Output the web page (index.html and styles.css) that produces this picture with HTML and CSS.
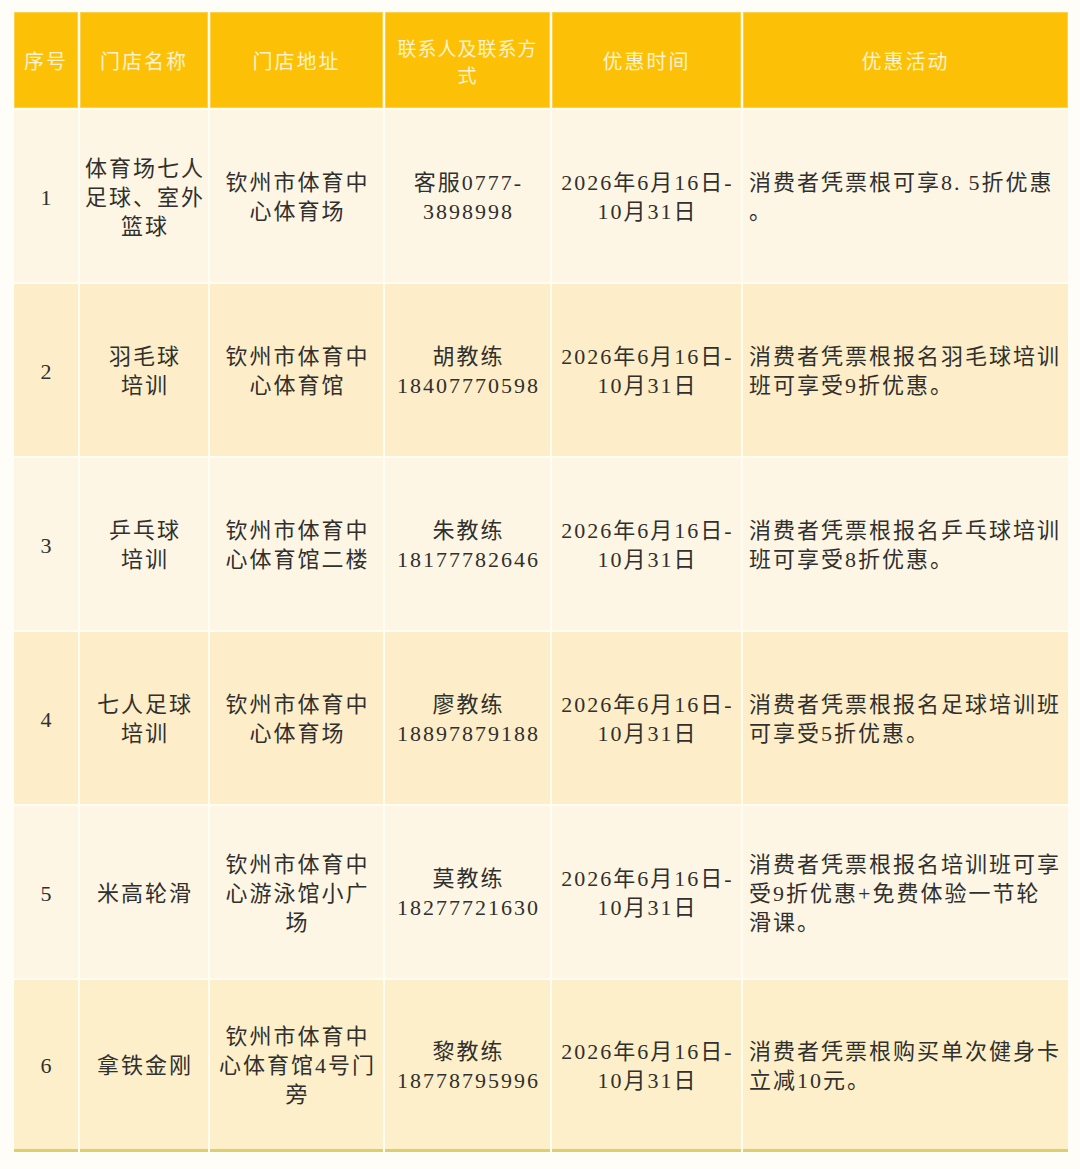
FILE: index.html
```html
<!DOCTYPE html>
<html lang="zh-CN">
<head>
<meta charset="utf-8">
<title>优惠活动</title>
<link rel="stylesheet" href="styles.css">
</head>
<body>
<div class="page">
  <div class="table">
    <div class="th">序号</div>
    <div class="th">门店名称</div>
    <div class="th">门店地址</div>
    <div class="th narrow">联系人及联系方<br>式</div>
    <div class="th">优惠时间</div>
    <div class="th">优惠活动</div>

    <div class="td odd">1</div>
    <div class="td odd">体育场七人<br>足球、室外<br>篮球</div>
    <div class="td odd">钦州市体育中<br>心体育场</div>
    <div class="td odd">客服0777-<br>3898998</div>
    <div class="td odd">2026年6月16日-<br>10月31日</div>
    <div class="td odd left"><div class="txt">消费者凭票根可享8<span class="dot">.</span>5折优惠<br>。</div></div>

    <div class="td even">2</div>
    <div class="td even">羽毛球<br>培训</div>
    <div class="td even">钦州市体育中<br>心体育馆</div>
    <div class="td even">胡教练<br>18407770598</div>
    <div class="td even">2026年6月16日-<br>10月31日</div>
    <div class="td even left">消费者凭票根报名羽毛球培训<br>班可享受9折优惠。</div>

    <div class="td odd">3</div>
    <div class="td odd">乒乓球<br>培训</div>
    <div class="td odd">钦州市体育中<br>心体育馆二楼</div>
    <div class="td odd">朱教练<br>18177782646</div>
    <div class="td odd">2026年6月16日-<br>10月31日</div>
    <div class="td odd left">消费者凭票根报名乒乓球培训<br>班可享受8折优惠。</div>

    <div class="td even">4</div>
    <div class="td even">七人足球<br>培训</div>
    <div class="td even">钦州市体育中<br>心体育场</div>
    <div class="td even">廖教练<br>18897879188</div>
    <div class="td even">2026年6月16日-<br>10月31日</div>
    <div class="td even left">消费者凭票根报名足球培训班<br>可享受5折优惠。</div>

    <div class="td odd">5</div>
    <div class="td odd">米高轮滑</div>
    <div class="td odd">钦州市体育中<br>心游泳馆小广<br>场</div>
    <div class="td odd">莫教练<br>18277721630</div>
    <div class="td odd">2026年6月16日-<br>10月31日</div>
    <div class="td odd left">消费者凭票根报名培训班可享<br>受9折优惠+免费体验一节轮<br>滑课。</div>

    <div class="td even last">6</div>
    <div class="td even last">拿铁金刚</div>
    <div class="td even last">钦州市体育中<br>心体育馆4号门<br>旁</div>
    <div class="td even last">黎教练<br>18778795996</div>
    <div class="td even last">2026年6月16日-<br>10月31日</div>
    <div class="td even last left">消费者凭票根购买单次健身卡<br>立减10元。</div>
  </div>
</div>
</body>
</html>
```

FILE: styles.css
```css
html, body {
  margin: 0;
  padding: 0;
  background: #fffdf7;
}

.page {
  width: 1080px;
  height: 1169px;
  padding: 12px 0 0 14px;
  box-sizing: border-box;
  background: #fffdf7;
}

.table {
  display: grid;
  grid-template-columns: 64px 128px 173px 165px 189px 325px;
  grid-template-rows: 96px repeat(6, 172px);
  column-gap: 2px;
  row-gap: 2px;
  width: 1054px;
  background: #fffcf2;
}

.th {
  display: flex;
  align-items: center;
  justify-content: center;
  text-align: center;
  background: #fcc106;
  box-shadow: inset 0 0 0 1px #fdd24a;
  color: #fdf2cf;
  font-family: "Noto Sans CJK SC", sans-serif;
  font-size: 20px;
  letter-spacing: 2px;
  line-height: 28px;
  padding-top: 2px;
  box-sizing: border-box;
}

.th.narrow {
  font-size: 19px;
  letter-spacing: 1px;
  line-height: 27px;
}

.td {
  display: flex;
  align-items: center;
  justify-content: center;
  text-align: center;
  white-space: nowrap;
  color: #30302e;
  font-family: "Liberation Serif", "Noto Sans CJK SC", serif;
  font-size: 22px;
  letter-spacing: 2px;
  line-height: 29px;
  padding: 2px 0 0 2px;
  box-sizing: border-box;
}

.td.left {
  justify-content: flex-start;
  text-align: left;
  padding-left: 6px;
}

.dot {
  letter-spacing: 9px;
}

.odd {
  background: #fef6e5;
}

.even {
  background: #fdedc8;
}

.last {
  border-bottom: 3px solid #dccf6c;
  background: #fdefc9;
}
```
